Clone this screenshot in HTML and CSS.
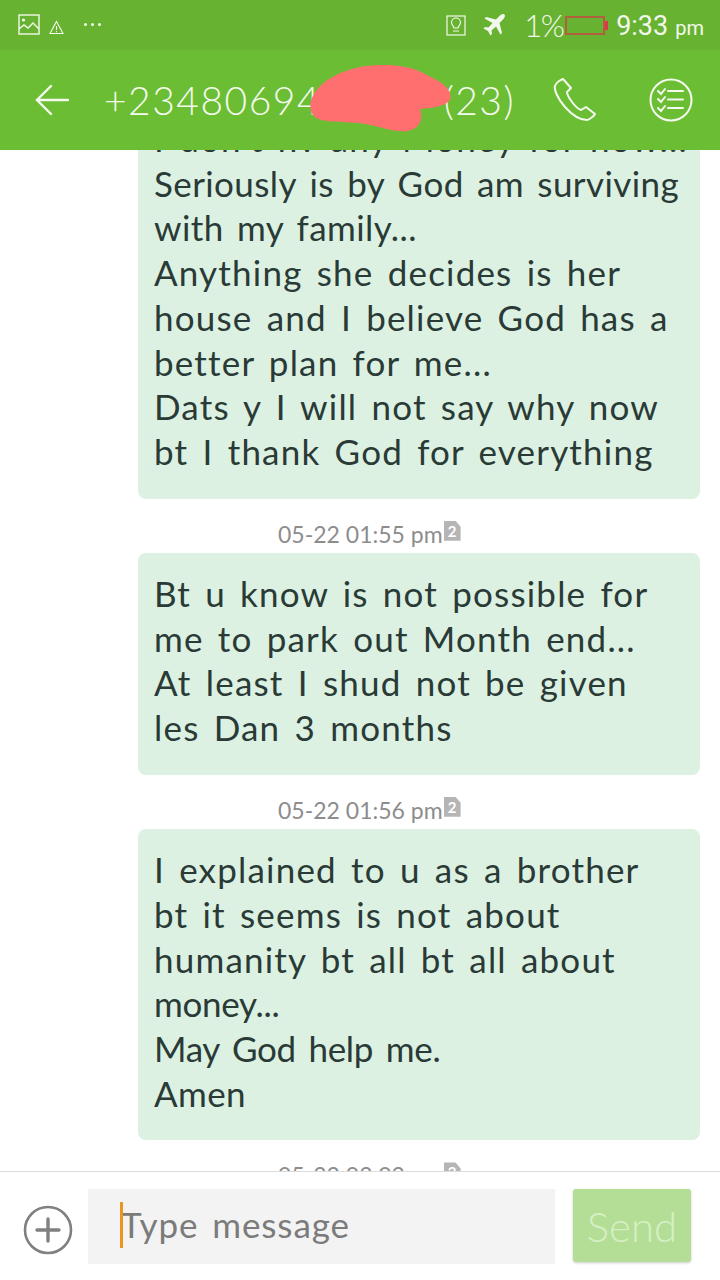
FILE: index.html
```html
<!DOCTYPE html>
<html lang="en">
<head>
    <meta charset="UTF-8">
    <meta name="viewport" content="width=device-width, initial-scale=1.0">
    <title>Messages</title>
    <link rel="stylesheet" href="styles.css">
</head>
<body>
    <div class="screen">
        <!-- Status bar -->
        <div class="status-bar">
            <div class="status-left">
                <svg class="ic-picture" width="22" height="22" viewBox="0 0 22 22" fill="none" stroke="#f2f8ec" stroke-width="1.4"><rect x="1" y="1" width="20" height="19"/><circle cx="5.5" cy="6" r="1.6" fill="#f2f8ec" stroke="none"/><path d="M1 15l5-4 4 3 5-5 6 6"/></svg>
                <svg class="ic-warn" width="15" height="15" viewBox="0 0 15 15" fill="none" stroke="#f2f8ec" stroke-width="1.1"><path d="M7.5 1.5L14 13.5H1z"/><path d="M7.5 6v4M7.5 11v1.2"/></svg>
                <span class="dots"><i></i><i></i><i></i></span>
            </div>
            <div class="status-right">
                <svg class="ic-bulb" width="20" height="21" viewBox="0 0 20 21" fill="none" stroke="#f2f8ec" stroke-width="1.2"><rect x="1" y="1" width="18" height="19"/><path d="M8 13c0-2-2.500-2.500-2.500-5.500a4.500 4.500 0 0 1 9 0C14.500 10.500 12 11 12 13zM7 16h6"/></svg>
                <svg class="ic-plane" width="24" height="24" viewBox="0 0 24 24" fill="#f2f8ec"><path d="M22.500 1.500c-1.500-1-3.500 0-5 1.500l-3.500 3.500L4 4 2.500 5.500l8 4.500-4 4.500-3.500-.5L1.500 15.500l4.500 2.500 2.500 4.500 1.500-1.500-.5-3.500 4.500-4 4.500 8 1.500-1.500L17.500 10 21 6.500c1.500-1.500 2.500-3.500 1.500-5z"/></svg>
                <span class="battery-pct">1%</span>
                <span class="battery"><span class="battery-nub"></span></span>
                <span class="clock">9:33<small>pm</small></span>
            </div>
        </div>

        <!-- Header -->
        <div class="header">
            <svg class="ic-back" width="34" height="32" viewBox="0 0 34 32" fill="none" stroke="#f4faee" stroke-width="2.4" stroke-linecap="round"><path d="M16 2L2 16l14 14M2 16h31"/></svg>
            <div class="title"><span>+23480694</span><span>(23)</span></div>
            <svg class="ic-call" width="44" height="44" viewBox="0 0 44 44" fill="none" stroke="#f4faee" stroke-width="2"><path d="M2 8c-1 3 2 12 10 21s15 13 22 13c2 0 7-4 8-6l-9-7-5 3c-3-1-6-4-9-8s-5-7-5-10l4-4L10 1C7 2 3 5 2 8z" stroke-linejoin="round"/></svg>
            <svg class="ic-list" width="44" height="44" viewBox="0 0 44 44" fill="none" stroke="#f4faee" stroke-width="2"><circle cx="22" cy="22" r="20.500"/><path d="M9 13l3 3 4-5M9 21l3 3 4-5M9 30l3 3 4-5M19 13h15M19 21.500h15M19 30h15" stroke-linecap="round"/></svg>
        </div>

        <svg class="scribble" width="150" height="72" viewBox="0 0 150 72"><path d="M3 38C8 22 25 10 52 4 75 0 100 2 115 10c10 6 20 8 26 18 5 10-1 16-29 18 3 9 1 19-12 22-15 2-30-6-50-8-20-2-40 0-45-8-3-4-3-10-2-14z" fill="#ff6f6f"/></svg>

        <!-- Messages -->
        <div class="thread">
            <div class="bubble bubble-first">I don't hv any Money for now...<br><span class="tight">Seriously is by God am surviving</span><br><span class="tight">with my family...</span><br>Anything she decides is her<br>house and I believe God has a<br>better plan for me...<br>Dats y I will not say why now<br>bt I thank God for everything</div>
            <div class="stamp"><span>05-22 01:55 pm</span><b class="sim">2</b></div>
            <div class="bubble">Bt u know is not possible for<br>me to park out Month end...<br>At least I shud not be given<br>les Dan 3 months</div>
            <div class="stamp"><span>05-22 01:56 pm</span><b class="sim">2</b></div>
            <div class="bubble">I explained to u as a brother<br>bt it seems is not about<br>humanity bt all bt all about<br><span class="tighter">money...</span><br><span class="tighter">May God help me.</span><br><span class="tight">Amen</span></div>
            <div class="stamp"><span>05-22 02:02 pm</span><b class="sim">2</b></div>
        </div>

        <!-- Compose bar -->
        <div class="compose">
            <svg class="ic-plus" width="50" height="50" viewBox="0 0 50 50" fill="none" stroke="#808080"><circle cx="25" cy="25" r="23" stroke-width="2.600"/><path d="M25 14v22M14 25h22" stroke-width="3.400" stroke-linecap="round"/></svg>
            <div class="input"><i class="caret"></i><span>Type message</span></div>
            <button class="send">Send</button>
        </div>
    </div>
</body>
</html>
```

FILE: styles.css
```css
body {
    margin: 0;
    background: #fff;
    font-family: 'Lato', 'Noto Sans', sans-serif;
}
.screen {
    position: relative;
    width: 720px;
    height: 1280px;
    display: flex;
    flex-direction: column;
    overflow: hidden;
}
.status-bar {
    height: 50px;
    flex: none;
    background: #68b231;
    display: flex;
    justify-content: space-between;
    align-items: center;
    padding: 0 16px 0 18px;
    color: #f2f8ec;
}
.status-left, .status-right {
    display: flex;
    align-items: center;
}
.ic-warn {
    margin: 4px 0 0 9px;
}
.dots {
    display: flex;
    gap: 4px;
    margin: 0 0 2px 20px;
}
.dots i {
    width: 3px;
    height: 3px;
    border-radius: 50%;
    background: #f2f8ec;
}
.ic-plane {
    margin-left: 16px;
}
.battery-pct {
    font-size: 31px;
    font-weight: 300;
    letter-spacing: -1.5px;
    margin-left: 18px;
    width: 41px;
}
.battery {
    position: relative;
    box-sizing: border-box;
    width: 40px;
    height: 19px;
    border: 2px solid #b0603f;
}
.battery-nub {
    position: absolute;
    right: -5px;
    top: 3px;
    width: 3px;
    height: 9px;
    background: #e0354a;
}
.clock {
    font-family: 'Roboto', sans-serif;
    font-size: 27px;
    margin: 2px 0 0 11px;
}
.clock small {
    font-size: 20px;
    margin-left: 7px;
}
.header {
    position: relative;
    z-index: 2;
    height: 100px;
    flex: none;
    background: #6bbd33;
    display: flex;
    align-items: center;
    padding: 0 24px 0 35px;
    color: #f4faee;
}
.title {
    width: 411px;
    margin-left: 35px;
    display: flex;
    justify-content: space-between;
    font-size: 39px;
    font-weight: 300;
    letter-spacing: 1.5px;
}
.ic-call {
    margin-left: 38px;
}
.ic-list {
    margin-left: 52px;
}
.scribble {
    position: absolute;
    z-index: 3;
    left: 308px;
    top: 63px;
}
.thread {
    flex: 1;
    min-height: 0;
    overflow: hidden;
    padding: 0 20px 0 138px;
}
.bubble {
    background: #dcf1e2;
    border-radius: 8px;
    padding: 18px 16px 25px;
    font-size: 35px;
    line-height: 44.700px;
    font-weight: 400;
    letter-spacing: 1.2px;
    word-spacing: 4px;
    color: #2a3a36;
    white-space: nowrap;
    overflow: hidden;
}
.bubble .tight {
    letter-spacing: 0.4px;
}
.bubble .tighter {
    letter-spacing: -0.3px;
}
.bubble-first {
    margin-top: -52px;
}
.stamp {
    height: 54.400px;
    box-sizing: border-box;
    padding: 20px 0 0 140px;
    display: flex;
    align-items: flex-start;
    font-size: 23px;
    line-height: 30px;
    color: #8d8d8d;
}
.sim {
    width: 17px;
    height: 20px;
    margin: 2px 0 0 1px;
    background: #b5b5b5;
    color: #fff;
    font-size: 15px;
    line-height: 20px;
    text-align: center;
    clip-path: polygon(0 0, 70% 0, 100% 30%, 100% 100%, 0 100%);
}
.compose {
    height: 109px;
    flex: none;
    box-sizing: border-box;
    border-top: 1px solid #dcdcdc;
    background: #fff;
    display: flex;
    align-items: flex-start;
    padding: 17px 0 0 23px;
}
.ic-plus {
    margin-top: 16px;
}
.input {
    position: relative;
    box-sizing: border-box;
    width: 467px;
    height: 75px;
    margin-left: 15px;
    padding-left: 33px;
    background: #f3f3f3;
    color: #7b7b7b;
    font-size: 35px;
    line-height: 70px;
    letter-spacing: 0.9px;
    word-spacing: 4px;
}
.caret {
    position: absolute;
    left: 32px;
    top: 13px;
    width: 3px;
    height: 46px;
    background: #e8961e;
}
.send {
    width: 118px;
    height: 73px;
    margin-left: 18px;
    padding: 0;
    border: none;
    border-radius: 3px;
    background: #b4de96;
    box-shadow: 0 1px 3px rgba(0, 0, 0, 0.2);
    color: #d6efc4;
    font-family: inherit;
    font-size: 42px;
    font-weight: 300;
}
```
